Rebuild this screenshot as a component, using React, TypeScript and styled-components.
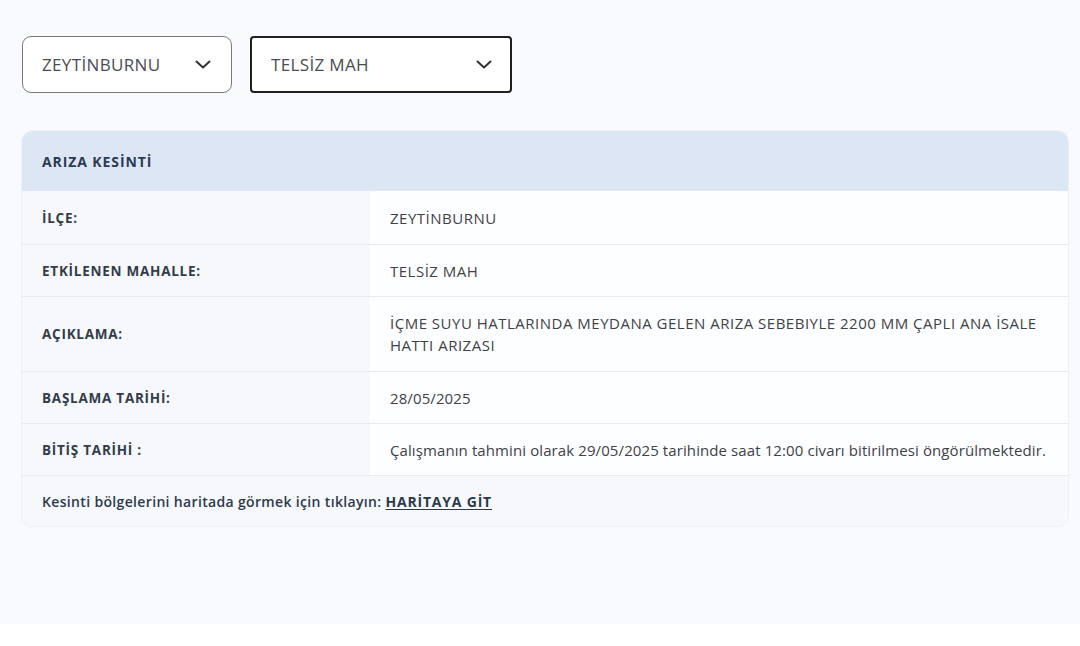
import styled, { createGlobalStyle } from 'styled-components'

const GlobalStyle = createGlobalStyle`
  html, body {
    margin: 0;
    padding: 0;
    background: #ffffff;
  }
  body {
    font-family: "Open Sans", "Noto Sans", sans-serif;
    color: #333d4a;
  }
`

const Page = styled.div`
  background: #f8fafd;
  min-height: 624px;
  box-sizing: border-box;
  padding: 36px 12px 0 22px;
`

const Filters = styled.div`
  display: flex;
  gap: 18px;
  margin-bottom: 38px;
`

const Select = styled.div<{ $active?: boolean; $width: number }>`
  width: ${p => p.$width}px;
  height: 57px;
  box-sizing: border-box;
  display: flex;
  align-items: center;
  justify-content: space-between;
  padding: 0 ${p => (p.$active ? 18 : 20)}px 0 19px;
  background: #ffffff;
  border: ${p => (p.$active ? '2px solid #1f1f1f' : '1px solid #7a7a7a')};
  border-radius: ${p => (p.$active ? 4 : 9)}px;
  font-size: 17px;
  font-weight: 500;
  color: #484d55;
  letter-spacing: 0.35px;
`

const Chevron = () => (
  <svg width="16" height="9" viewBox="0 0 16 9" fill="none">
    <path d="M1.5 1.5L8 7.5l6.5-6" stroke="#2f3338" strokeWidth="2" strokeLinecap="round" strokeLinejoin="round" />
  </svg>
)

const Card = styled.div`
  width: 1046px;
  border-radius: 11px;
  overflow: hidden;
  background: #fdfeff;
  box-shadow: 0 0 0 1px #eef1f6;
`

const CardHeader = styled.div`
  height: 60px;
  display: flex;
  align-items: center;
  padding-left: 20px;
  background: #dde6f5;
  font-size: 14px;
  font-weight: 700;
  color: #2a3b53;
  letter-spacing: 0.9px;
`

const Row = styled.div<{ $tall?: boolean }>`
  display: grid;
  grid-template-columns: 348px 1fr;
  box-sizing: border-box;
  min-height: ${p => (p.$tall ? 75 : 52)}px;
  border-top: 1px solid #e7ebf0;
  &:first-of-type {
    border-top: none;
    min-height: 53px;
  }
`

const Label = styled.div`
  display: flex;
  align-items: center;
  padding-left: 20px;
  background: #f6f8fb;
  font-size: 13.5px;
  font-weight: 700;
  color: #333d4a;
  letter-spacing: 0.75px;
`

const Value = styled.div<{ $caps?: boolean }>`
  display: flex;
  align-items: center;
  padding: 0 20px;
  font-size: 15px;
  line-height: 22px;
  color: #3d4248;
  letter-spacing: ${p => (p.$caps ? 0.5 : 0.1)}px;
`

const Footer = styled.div`
  height: 50px;
  display: flex;
  align-items: center;
  padding-left: 20px;
  gap: 4px;
  background: #f6f8fb;
  border-top: 1px solid #e7ebf0;
  font-size: 14px;
  font-weight: 600;
  color: #2c3a4c;
  letter-spacing: 0.34px;
`

const MapLink = styled.a`
  color: #2c3a4c;
  font-weight: 700;
  letter-spacing: 0.8px;
  text-decoration: underline;
  text-underline-offset: 2px;
`

const rows = [
  { label: 'İLÇE:', value: 'ZEYTİNBURNU', caps: true },
  { label: 'ETKİLENEN MAHALLE:', value: 'TELSİZ MAH', caps: true },
  {
    label: 'AÇIKLAMA:',
    value: 'İÇME SUYU HATLARINDA MEYDANA GELEN ARIZA SEBEBIYLE 2200 MM ÇAPLI ANA İSALE HATTI ARIZASI',
    caps: true,
    tall: true,
  },
  { label: 'BAŞLAMA TARİHİ:', value: '28/05/2025' },
  {
    label: 'BİTİŞ TARİHİ :',
    value: 'Çalışmanın tahmini olarak 29/05/2025 tarihinde saat 12:00 civarı bitirilmesi öngörülmektedir.',
  },
]

export default function App() {
  return (
    <>
      <GlobalStyle />
      <Page>
        <Filters>
          <Select $width={210}>
            <span>ZEYTİNBURNU</span>
            <Chevron />
          </Select>
          <Select $active $width={262}>
            <span>TELSİZ MAH</span>
            <Chevron />
          </Select>
        </Filters>
        <Card>
          <CardHeader>ARIZA KESİNTİ</CardHeader>
          <div>
            {rows.map(r => (
              <Row key={r.label} $tall={r.tall}>
                <Label>{r.label}</Label>
                <Value $caps={r.caps}>{r.value}</Value>
              </Row>
            ))}
          </div>
          <Footer>
            Kesinti bölgelerini haritada görmek için tıklayın:
            <MapLink href="#">HARİTAYA GİT</MapLink>
          </Footer>
        </Card>
      </Page>
    </>
  )
}
